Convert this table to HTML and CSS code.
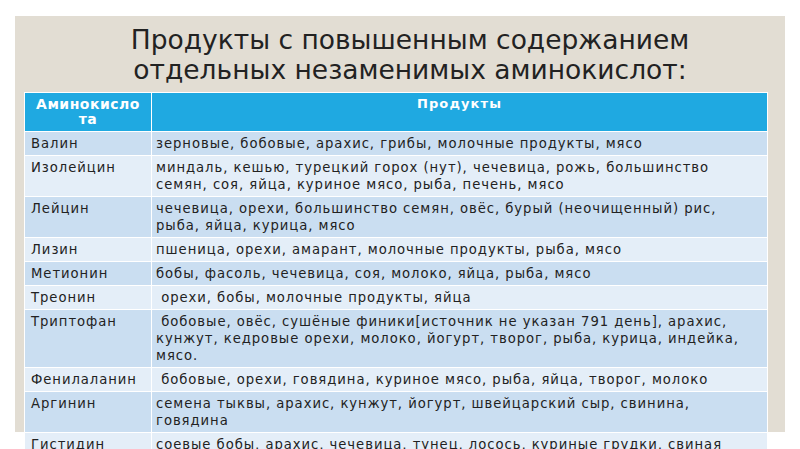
FILE: index.html
```html
<!DOCTYPE html>
<html lang="ru">
<head>
<meta charset="utf-8">
<title>Аминокислоты</title>
<link rel="stylesheet" href="styles.css">
</head>
<body>
<div class="slide">
  <h1 class="title">Продукты с повышенным содержанием<br>отдельных незаменимых аминокислот:</h1>
  <table class="amino">
    <thead>
      <tr><th class="c1">Аминокисло<br>та</th><th class="c2">Продукты</th></tr>
    </thead>
    <tbody>
      <tr class="dark"><td>Валин</td><td>зерновые, бобовые, арахис, грибы, молочные продукты, мясо</td></tr>
      <tr class="light"><td>Изолейцин</td><td>миндаль, кешью, турецкий горох (нут), чечевица, рожь, большинство<br>семян, соя, яйца, куриное мясо, рыба, печень, мясо</td></tr>
      <tr class="dark"><td>Лейцин</td><td>чечевица, орехи, большинство семян, овёс, бурый (неочищенный) рис,<br>рыба, яйца, курица, мясо</td></tr>
      <tr class="light"><td>Лизин</td><td>пшеница, орехи, амарант, молочные продукты, рыба, мясо</td></tr>
      <tr class="dark"><td>Метионин</td><td>бобы, фасоль, чечевица, соя, молоко, яйца, рыба, мясо</td></tr>
      <tr class="light"><td>Треонин</td><td>&nbsp;орехи, бобы, молочные продукты, яйца</td></tr>
      <tr class="dark"><td>Триптофан</td><td>&nbsp;бобовые, овёс, сушёные финики[источник не указан 791 день], арахис,<br>кунжут, кедровые орехи, молоко, йогурт, творог, рыба, курица, индейка,<br>мясо.</td></tr>
      <tr class="light"><td>Фенилаланин</td><td>&nbsp;бобовые, орехи, говядина, куриное мясо, рыба, яйца, творог, молоко</td></tr>
      <tr class="dark"><td>Аргинин</td><td>семена тыквы, арахис, кунжут, йогурт, швейцарский сыр, свинина,<br>говядина</td></tr>
      <tr class="light"><td>Гистидин</td><td>соевые бобы, арахис, чечевица, тунец, лосось, куриные грудки, свиная<br>вырезка, говяжье филе, курица</td></tr>
    </tbody>
  </table>
</div>
</body>
</html>
```
FILE: styles.css
```css
html, body {
  margin: 0;
  padding: 0;
  background: #ffffff;
}
html {
  overflow: hidden;
}
body {
  font-family: "DejaVu Sans", "Noto Sans", sans-serif;
  color: #262626;
}
.slide {
  margin: 16px 0 0 15px;
  width: 770px;
  padding-top: 9px;
  box-sizing: border-box;
  background-image: linear-gradient(#e2ddd3, #e2ddd3);
  background-repeat: no-repeat;
  background-size: 100% 416px;
}
.title {
  margin: 0 0 7px 0;
  padding-left: 20px;
  font-size: 26.5px;
  font-weight: normal;
  line-height: 30px;
  text-align: center;
  color: #222222;
  letter-spacing: 0;
}
.amino {
  margin-left: 9px;
  width: 744px;
  border-collapse: collapse;
  table-layout: fixed;
  font-size: 13.2px;
  letter-spacing: 0.95px;
}
.amino th, .amino td {
  border: 1px solid #ffffff;
  vertical-align: top;
  white-space: nowrap;
  overflow: hidden;
}
.amino th {
  background: #1fa9e1;
  color: #ffffff;
  font-size: 14px;
  font-weight: bold;
  line-height: 15px;
  text-align: center;
  padding: 4px 5px;
  height: 30px;
  letter-spacing: 0.5px;
}
.amino th.c1 { width: 116px; }
.amino th.c2 { padding-top: 3px; font-size: 13px; letter-spacing: 1.1px; }
.amino td {
  line-height: 17px;
  padding: 3px 4px;
  color: #222222;
}
.amino td:first-child { padding-left: 6px; }
.amino tr.dark td { background: #cadef1; }
.amino tr.light td { background: #e4eef8; }
```
